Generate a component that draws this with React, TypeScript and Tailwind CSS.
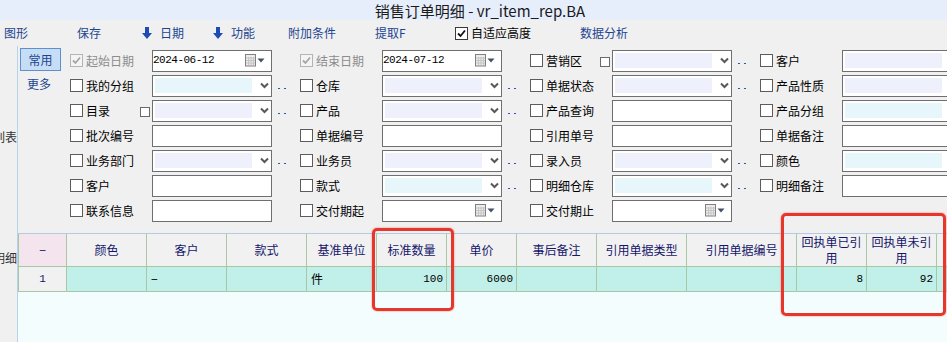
import React from "react";

type Fill = "lav" | "cyan";
type Cell = {
  label?: string;
  check?: "off" | "disabled";
  kind?: "date" | "drop" | "text";
  fill?: Fill;
  value?: string;
  dots?: boolean;
  pre?: boolean;
};

// form rows, four columns each
const rows: Cell[][] = [
  [
    { label: "起始日期", check: "disabled", kind: "date", value: "2024-06-12" },
    { label: "结束日期", check: "disabled", kind: "date", value: "2024-07-12" },
    { label: "营销区", pre: true, kind: "drop", fill: "lav", dots: true },
    { label: "客户", kind: "drop", fill: "lav" },
  ],
  [
    { label: "我的分组", kind: "drop", fill: "cyan", dots: true },
    { label: "仓库", kind: "drop", fill: "lav", dots: true },
    { label: "单据状态", kind: "drop", fill: "lav", dots: true },
    { label: "产品性质", kind: "drop", fill: "lav" },
  ],
  [
    { label: "目录", pre: true, kind: "drop", fill: "lav", dots: true },
    { label: "产品", kind: "drop", fill: "lav", dots: true },
    { label: "产品查询", kind: "text" },
    { label: "产品分组", kind: "drop", fill: "cyan" },
  ],
  [
    { label: "批次编号", kind: "text" },
    { label: "单据编号", kind: "text" },
    { label: "引用单号", kind: "text" },
    { label: "单据备注", kind: "text" },
  ],
  [
    { label: "业务部门", kind: "drop", fill: "lav", dots: true },
    { label: "业务员", kind: "drop", fill: "lav", dots: true },
    { label: "录入员", kind: "drop", fill: "lav", dots: true },
    { label: "颜色", kind: "drop", fill: "cyan" },
  ],
  [
    { label: "客户", kind: "text" },
    { label: "款式", kind: "drop", fill: "cyan", dots: true },
    { label: "明细仓库", kind: "drop", fill: "cyan", dots: true },
    { label: "明细备注", kind: "text" },
  ],
  [
    { label: "联系信息", kind: "text" },
    { label: "交付期起", kind: "date", value: "" },
    { label: "交付期止", kind: "date", value: "" },
    {},
  ],
];

type Col = { w: number; h: string; d?: string; align?: "left" | "right" | "center"; pink?: boolean };
const cols: Col[] = [
  { w: 49, h: "−", d: "1", align: "center", pink: true },
  { w: 80, h: "颜色" },
  { w: 80, h: "客户", d: "−", align: "left" },
  { w: 80, h: "款式" },
  { w: 70, h: "基准单位", d: "件", align: "left" },
  { w: 70, h: "标准数量", d: "100", align: "right" },
  { w: 70, h: "单价", d: "6000", align: "right" },
  { w: 80, h: "事后备注" },
  { w: 90, h: "引用单据类型" },
  { w: 110, h: "引用单据编号" },
  { w: 70, h: "回执单已引用", d: "8", align: "right" },
  { w: 70, h: "回执单未引用", d: "92", align: "right" },
  { w: 70, h: "事后说明" },
];

function Check({ state }: { state: "off" | "on" | "disabled" }) {
  if (state === "off")
    return <span className="block w-[13px] h-[13px] shrink-0 border border-[#5c5c5c] bg-white" />;
  const dis = state === "disabled";
  return (
    <span
      className={
        dis
          ? "flex w-[13px] h-[13px] shrink-0 border border-[#b4b4b4] bg-[#f4f4f4]"
          : "flex w-[13px] h-[13px] shrink-0 border border-[#3a3a3a] bg-white"
      }
    >
      <svg width="11" height="11" viewBox="0 0 11 11">
        <path d="M2 5.5 L4.5 8 L9 2.5" fill="none" stroke={dis ? "#a6a6a6" : "#111"} strokeWidth="1.8" />
      </svg>
    </span>
  );
}

function Calendar() {
  return (
    <svg width="20" height="13" viewBox="0 0 20 13" className="mr-[6px] shrink-0">
      <rect x="0.5" y="0.5" width="10" height="11.5" fill="#ececec" stroke="#808080" />
      <path d="M3.5 3 V11 M6 3 V11 M8.5 3 V11 M1 4 H10 M1 6.5 H10 M1 9 H10" stroke="#c4c4c4" strokeWidth="1" />
      <polygon points="12.5,4.5 19.5,4.5 16,8.5" fill="#45516c" />
    </svg>
  );
}

function Chevron() {
  return (
    <svg width="9" height="7" viewBox="0 0 9 7" className="shrink-0">
      <path d="M1 1.5 L4.5 5 L8 1.5" fill="none" stroke="#595959" strokeWidth="2" />
    </svg>
  );
}

function Field({ c }: { c: Cell }) {
  if (!c.label) return <div className="w-[230px] shrink-0" />;
  return (
    <div className="w-[230px] shrink-0 flex items-center h-[25px]">
      <div className="w-[82px] shrink-0 flex items-center">
        <Check state={c.check ?? "off"} />
        <span className={c.check === "disabled" ? "ml-[3px] flex-1 text-[#8c8c8c]" : "ml-[3px] flex-1"}>{c.label}</span>
        {c.pre && <span className="block w-[10px] h-[10px] mr-[2px] mt-[3px] border border-[#6a6a6a] bg-white" />}
      </div>
      <div className="w-[120px] h-[22px] shrink-0 border border-[#6f6f6f] bg-white flex items-center">
        {c.kind === "date" && (
          <>
            <span className="flex-1 font-['Liberation_Mono',monospace] text-[11px] tracking-[-0.5px] leading-none">{c.value}</span>
            <Calendar />
          </>
        )}
        {c.kind === "drop" && (
          <>
            <div className={c.fill === "cyan" ? "ml-[2px] w-[97px] h-[15px] bg-[#e6f6fb]" : "ml-[2px] w-[97px] h-[15px] bg-[#eef0fc]"} />
            <span className="ml-[8px]">
              <Chevron />
            </span>
          </>
        )}
      </div>
      {c.dots && (
        <div className="flex gap-[4px] ml-[6px] mt-[6px]">
          <span className="block w-[2px] h-[1px] bg-[#2b57a4]" />
          <span className="block w-[2px] h-[1px] bg-[#2b57a4]" />
        </div>
      )}
    </div>
  );
}

function Arrow() {
  return (
    <svg width="10" height="12" viewBox="0 0 10 12" className="mr-[8px]">
      <polygon points="3,0 7,0 7,6 10,6 5,12 0,6 3,6" fill="#1d4db3" />
    </svg>
  );
}

function Toolbar() {
  return (
    <div className="h-[26px] flex items-center text-[12px] text-[#1c4590] whitespace-nowrap">
      <span className="w-[77px] pl-[4px]">图形</span>
      <span className="w-[65px]">保存</span>
      <span className="w-[71px] flex items-center">
        <Arrow />
        日期
      </span>
      <span className="w-[75px] flex items-center">
        <Arrow />
        功能
      </span>
      <span className="w-[87px]">附加条件</span>
      <span className="w-[80px]">提取F</span>
      <span className="w-[125px] flex items-center text-black">
        <Check state="on" />
        <span className="ml-[3px]">自适应高度</span>
      </span>
      <span>数据分析</span>
    </div>
  );
}

export default function App() {
  return (
    <div className="relative w-[947px] h-[342px] overflow-hidden bg-[#f0f0f0] font-['Noto_Sans_CJK_SC',sans-serif] text-[12px] text-black">
      <div className="h-[20px] bg-[#e6edfb] flex items-center justify-center pl-[13px] text-[15px] leading-none text-[#1a1a1a]">
        销售订单明细 - vr_item_rep.BA
      </div>
      <Toolbar />

      <div className="flex h-[296px]">
        {/* side tabs, clipped */}
        <div className="w-[18px] shrink-0 border-r border-[#b8d2ea] flex flex-col text-[#333]">
          <div className="mt-[83px] h-[16px] leading-[16px] flex justify-end overflow-hidden whitespace-nowrap">列表</div>
          <div className="mt-[105px] h-[16px] leading-[16px] flex justify-end overflow-hidden whitespace-nowrap">明细</div>
        </div>

        <div className="flex-1 flex flex-col min-w-0">
          <div className="flex h-[187px] shrink-0">
            <div className="w-[52px] shrink-0 pl-[2px] pt-[2px]">
              <div className="w-[41px] h-[23px] border border-[#5d90d0] bg-[#c6ddf6] flex items-center justify-center text-[#1c4590]">
                常用
              </div>
              <div className="ml-[7px] mt-[5px] h-[16px] leading-[16px] text-[#1c4590]">更多</div>
            </div>
            <div className="pt-[2px] flex flex-col">
              {rows.map((r, i) => (
                <div key={i} className="flex">
                  {r.map((c, j) => (
                    <Field key={j} c={c} />
                  ))}
                </div>
              ))}
            </div>
          </div>

          {/* detail grid */}
          <div className="flex-1 flex flex-col border-t border-[#b3cbe0] bg-[#f4fdfe]">
            <div className="flex h-[33px] shrink-0">
              {cols.map((c, i) => (
                <div
                  key={i}
                  style={{ width: c.w }}
                  className={
                    (i === 0 ? "border-l bg-[#f4e4ee] " : "bg-[#f1f1f1] ") +
                    "shrink-0 border-r border-b border-[#a8c7a4] flex items-center justify-center text-center px-[4px] leading-[16px] text-[#15156a]"
                  }
                >
                  {c.h}
                </div>
              ))}
            </div>
            <div className="flex h-[25px] shrink-0">
              {cols.map((c, i) => (
                <div
                  key={i}
                  style={{ width: c.w }}
                  className={
                    (i === 0 ? "border-l bg-[#f1f1f1] justify-center font-['Liberation_Mono',monospace] text-[11px] text-[#15156a] " : "bg-[#c1efe9] ") +
                    (c.align === "right"
                      ? "justify-end pr-[3px] font-['Liberation_Mono',monospace] text-[11px] "
                      : c.align === "left"
                      ? "justify-start pl-[4px] "
                      : "") +
                    "shrink-0 border-r border-b border-[#a8c7a4] flex items-center"
                  }
                >
                  {c.d}
                </div>
              ))}
            </div>
          </div>
        </div>
      </div>

      {/* annotation boxes */}
      <div className="absolute left-[372px] top-[228px] w-[82px] h-[83px] rounded-[5px] border-[3px] border-[#e6372c] shadow-[0_0_2px_#f07a70]" />
      <div className="absolute left-[781px] top-[213px] w-[165px] h-[103px] rounded-[5px] border-[3px] border-[#e6372c] shadow-[0_0_2px_#f07a70]" />
    </div>
  );
}
